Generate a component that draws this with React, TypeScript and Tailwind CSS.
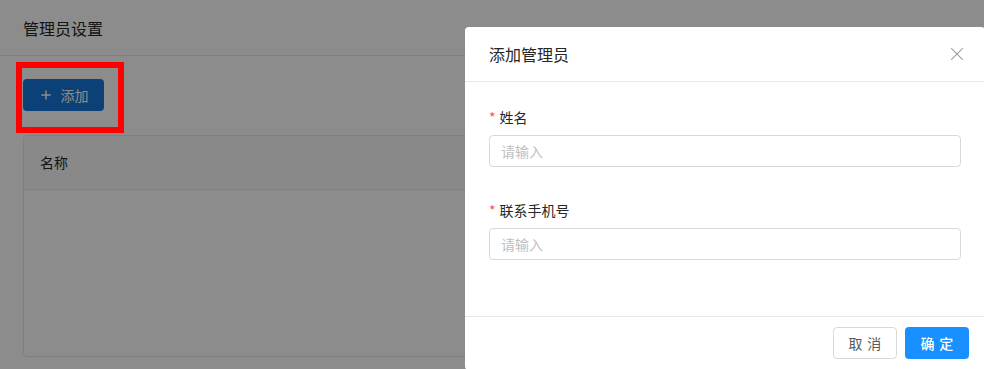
import { X, Plus } from "lucide-react"

const font = { fontFamily: '"Noto Sans CJK SC", "Noto Sans", sans-serif' }

function Field({ label }: { label: string }) {
  return (
    <div className="flex flex-col">
      <div className="h-[22px] flex items-center text-[14px] text-[#262626] mb-[7px]">
        <span className="text-[#ff4d4f] mr-[4px] text-[14px] leading-none">*</span>
        {label}
      </div>
      <input
        className="h-[32px] w-full border border-[#d9d9d9] rounded-[4px] px-[11px] text-[14px] outline-none placeholder:text-[#bfbfbf]"
        placeholder="请输入"
      />
    </div>
  )
}

export default function App() {
  return (
    <div className="relative w-[984px] h-[369px] overflow-hidden bg-white" style={font}>
      {/* page behind the mask */}
      <div className="flex flex-col h-full">
        <div className="h-[56px] flex items-center px-[23px] border-b border-[#e8e8e8] text-[16px] text-[#262626]">
          管理员设置
        </div>
        <div className="flex flex-col px-[23px] pt-[23px]">
          <button className="w-[81px] h-[32px] flex items-center justify-center gap-[8px] bg-[#1677d9] rounded-[4px] text-white text-[14px]">
            <Plus size={14} strokeWidth={2.5} />
            <span>添加</span>
          </button>
          <div className="mt-[24px] h-[222px] border border-[#e8e8e8] rounded-[4px] flex flex-col">
            <div className="h-[54px] flex items-center px-[16px] bg-[#fafafa] border-b border-[#e8e8e8] text-[14px] text-[#262626]">
              名称
            </div>
          </div>
        </div>
      </div>

      {/* mask */}
      <div className="absolute inset-0 bg-black/45" />

      {/* annotation */}
      <div className="absolute left-[16px] top-[62px] w-[108px] h-[71px] border-[6px] border-[#ff0000]" />

      {/* modal */}
      <div className="absolute left-[465px] top-[27px] w-[520px] h-[343px] bg-white rounded-[4px] flex flex-col">
        <div className="h-[55px] flex items-center justify-between pl-[24px] pr-[17px] border-b border-[#e8e8e8]">
          <span className="text-[16px] text-[#262626]">添加管理员</span>
          <X size={22} strokeWidth={1.1} className="text-[#8c8c8c]" />
        </div>
        <div className="flex-1 flex flex-col gap-[32px] px-[24px] pt-[24px]">
          <Field label="姓名" />
          <Field label="联系手机号" />
        </div>
        <div className="h-[54px] border-t border-[#e8e8e8] flex items-center justify-end gap-[8px] px-[16px] pb-[1px]">
          <button className="w-[64px] h-[32px] border border-[#d9d9d9] rounded-[4px] text-[14px] text-[#595959] tracking-[0.34em] pl-[0.34em]">
            取消
          </button>
          <button className="w-[64px] h-[32px] bg-[#1890ff] rounded-[4px] text-[14px] font-medium text-white tracking-[0.34em] pl-[0.34em]">
            确定
          </button>
        </div>
      </div>
    </div>
  )
}
